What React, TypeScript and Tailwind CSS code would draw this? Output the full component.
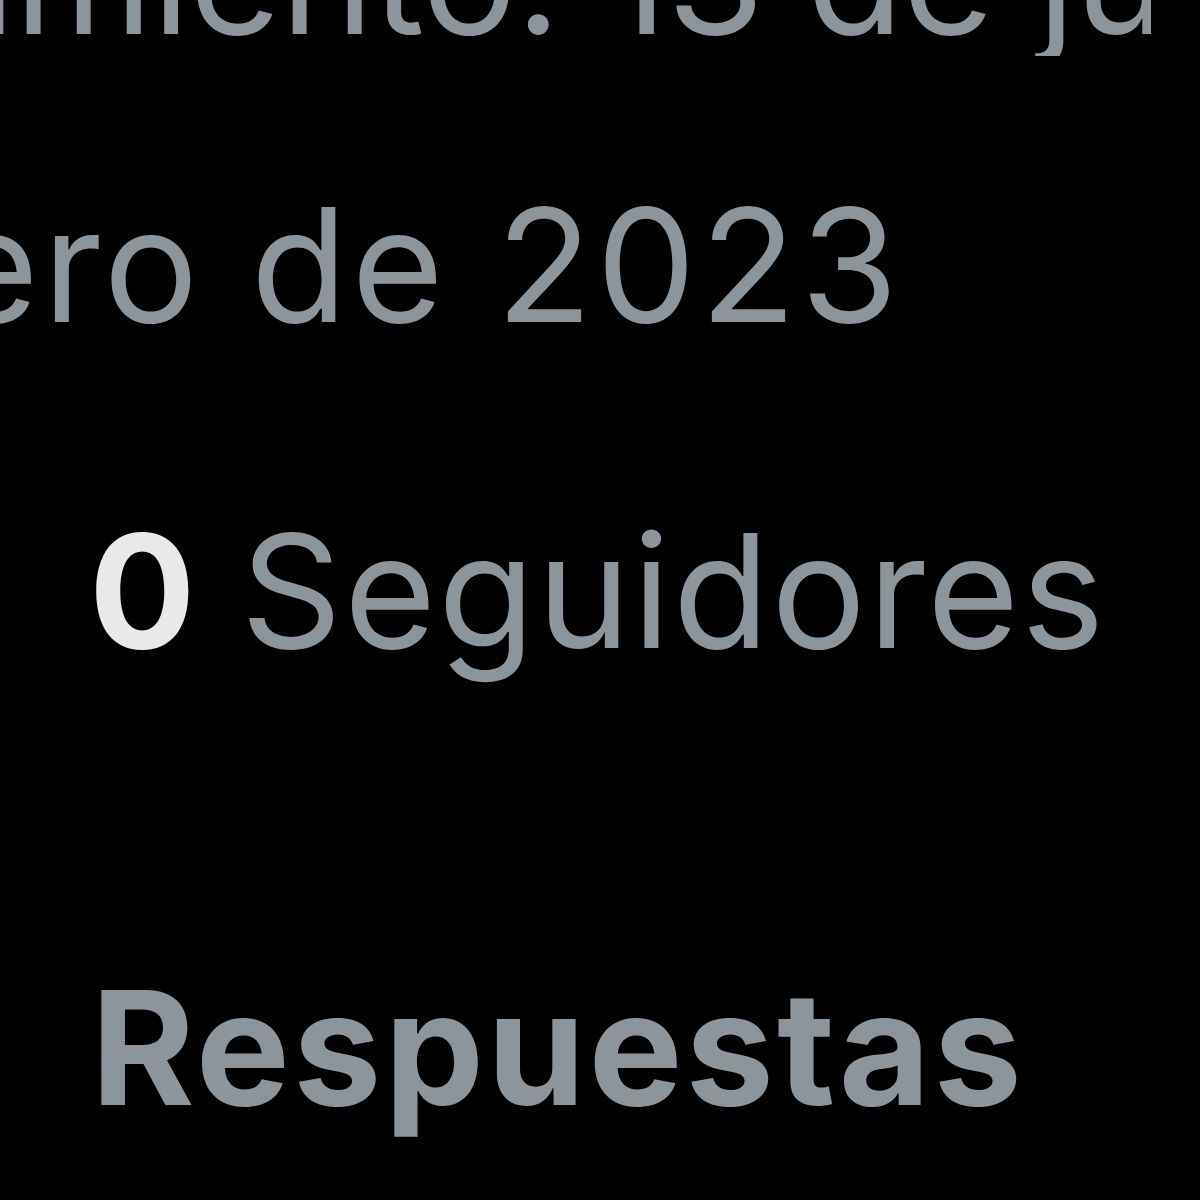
import React from 'react';

const font = { fontFamily: 'Inter, "Noto Sans", sans-serif' };

export default function App() {
  return (
    <div className="w-[1200px] h-[1200px] bg-black overflow-hidden" style={font}>
      {/* profile meta, cropped */}
      <div className="w-[1151px] overflow-hidden -mt-[102px]">
        <div className="ml-[-292px] whitespace-nowrap text-[158px] leading-none tracking-[-1px] text-[#8c949c]">
          nacimiento: 13 de junio
        </div>
      </div>

      <div className="mt-[130px] w-[902px] flex justify-end">
        <div className="shrink-0 whitespace-nowrap text-[158px] leading-none tracking-[4px] text-[#8c949c]">
          Se unió en febrero de 2023
        </div>
      </div>

      {/* stats */}
      <div className="mt-[168px] ml-[89px] flex items-baseline gap-[45px] whitespace-nowrap text-[158px] leading-none">
        <span className="font-bold text-[#e7e9ea]">0</span>
        <span className="tracking-[2px] text-[#8c949c]">Seguidores</span>
      </div>

      {/* tabs */}
      <div className="mt-[299px] ml-[91px] whitespace-nowrap text-[158px] leading-none font-bold tracking-[3px] text-[#8c949c]">
        Respuestas
      </div>
    </div>
  );
}
